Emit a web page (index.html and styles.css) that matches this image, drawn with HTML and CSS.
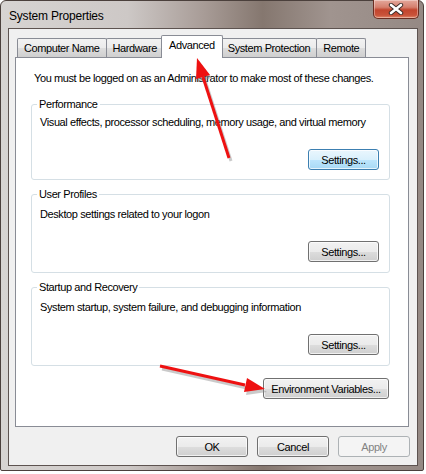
FILE: index.html
```html
<!DOCTYPE html>
<html>
<head>
	<title>System Properties</title>
	<link rel="stylesheet" href="styles.css">
</head>
<body>
	<div class="window">
		<div class="titlebar">
			<span class="title">System Properties</span>
			<div class="close">
				<svg width="16" height="12" viewBox="0 0 16 12">
					<path d="M3 2 L13 10 M13 2 L3 10" stroke="#3a2a26" stroke-width="4.4" stroke-linecap="round"/>
					<path d="M3 2 L13 10 M13 2 L3 10" stroke="#ffffff" stroke-width="2.6" stroke-linecap="round"/>
				</svg>
			</div>
		</div>

		<div class="client">
			<div class="tabs">
				<div class="tab first">Computer Name</div>
				<div class="tab">Hardware</div>
				<div class="tab active">Advanced</div>
				<div class="tab">System Protection</div>
				<div class="tab">Remote</div>
			</div>

			<div class="panel">
				<p class="note">You must be logged on as an Administrator to make most of these changes.</p>

				<fieldset class="group">
					<legend>Performance</legend>
					<p>Visual effects, processor scheduling, memory usage, and virtual memory</p>
					<div class="actions"><button class="btn default">Settings...</button></div>
				</fieldset>

				<fieldset class="group tall">
					<legend>User Profiles</legend>
					<p>Desktop settings related to your logon</p>
					<div class="actions"><button class="btn">Settings...</button></div>
				</fieldset>

				<fieldset class="group tall">
					<legend>Startup and Recovery</legend>
					<p>System startup, system failure, and debugging information</p>
					<div class="actions"><button class="btn">Settings...</button></div>
				</fieldset>

				<div class="env">
					<button class="btn wide">Environment Variables...</button>
				</div>
			</div>

			<div class="dialog-buttons">
				<button class="btn">OK</button>
				<button class="btn">Cancel</button>
				<button class="btn" disabled>Apply</button>
			</div>
		</div>

		<!-- red callout arrows drawn over the dialog -->
		<svg class="arrows" width="426" height="474" viewBox="0 0 426 474">
			<g fill="#8c8c8c" stroke="#8c8c8c" opacity="0.45" transform="translate(2 3)">
				<line x1="229" y1="158" x2="203" y2="77" stroke-width="3"/>
				<polygon points="197,58 210,75 196,79" stroke="none"/>
				<line x1="160" y1="366" x2="245" y2="385" stroke-width="3"/>
				<polygon points="265,389 244,392 247,378" stroke="none"/>
			</g>
			<g fill="#ee1111" stroke="#ee1111">
				<line x1="229" y1="158" x2="203" y2="77" stroke-width="3"/>
				<polygon points="197,58 210,75 196,79" stroke="none"/>
				<line x1="160" y1="366" x2="245" y2="385" stroke-width="3"/>
				<polygon points="265,389 244,392 247,378" stroke="none"/>
			</g>
		</svg>
	</div>
</body>
</html>
```

FILE: styles.css
```css
body {
	margin: 0;
	padding: 0;
	background-color: #ffffff;
	font-family: "Liberation Sans", Arial, sans-serif;
	font-size: 11px;
	letter-spacing: -0.4px;
	color: #000000;
}

.window {
	position: relative;
	width: 424px;
	height: 471px;
	box-sizing: border-box;
	padding: 0 5px 4px 7px;
	display: flex;
	flex-direction: column;
	border-radius: 6px 6px 2px 2px;
	border: 1px solid #4b403c;
	background: linear-gradient(to right, #d7d4d2 0%, #cdc8c6 30%, #a89c97 48%, #85776f 62%, #a0948f 78%, #958984 100%);
}

.titlebar {
	height: 29px;
	display: flex;
	align-items: flex-start;
}

.title {
	padding: 8px 0 0 1px;
	font-size: 12px;
	letter-spacing: -0.2px;
	color: #000000;
}

.close {
	margin-left: auto;
	margin-right: -1px;
	margin-top: -1px;
	width: 46px;
	height: 19px;
	box-sizing: border-box;
	display: flex;
	align-items: center;
	justify-content: center;
	border: 1px solid #6a2d22;
	border-top: none;
	border-radius: 0 0 5px 5px;
	background: linear-gradient(to bottom, #e4a89c 0%, #d5806e 40%, #c2452e 55%, #c9533a 85%, #e08a6c 100%);
	box-shadow: inset 0 0 0 1px rgba(255, 255, 255, 0.35);
}

.client {
	flex: 1;
	display: flex;
	flex-direction: column;
	background-color: #f0f0f0;
	border: 1px solid #5d5350;
	padding: 6px 8px 8px 6px;
}

.tabs {
	display: flex;
	align-items: flex-end;
	height: 22px;
	padding-left: 2px;
	position: relative;
	z-index: 1;
}

.tab {
	height: 18px;
	padding: 0 6px;
	line-height: 18px;
	border: 1px solid #898c95;
	border-bottom: none;
	border-radius: 2px 2px 0 0;
	margin-left: -1px;
	background: linear-gradient(to bottom, #f2f2f2 0%, #ebebeb 50%, #dddddd 51%, #cfcfcf 100%);
	white-space: nowrap;
}

.tab.first {
	margin-left: 0;
}

.tab.active {
	height: 22px;
	line-height: 19px;
	padding: 0 7px;
	margin: 0 -2px -1px -3px;
	background: #ffffff;
	position: relative;
}

.tab.active + .tab {
	margin-left: 0;
}

.panel {
	height: 370px;
	box-sizing: border-box;
	background-color: #ffffff;
	border: 1px solid #898c95;
	padding: 13px 18px 0 15px;
}

.panel p {
	margin: 0;
	line-height: 14px;
	white-space: nowrap;
}

.note {
	padding-left: 3px;
	margin-bottom: 12px !important;
}

.group {
	margin: 0 0 7px 0;
	padding: 4px 10px 9px 8px;
	border: 1px solid #d5dfe5;
	border-radius: 3px;
}

.group.tall {
	padding-top: 6px;
	padding-bottom: 10px;
}

.group legend {
	padding: 0 2px;
	margin-left: -3px;
	line-height: 14px;
}

.actions {
	display: flex;
	justify-content: flex-end;
	margin-top: 20px;
}

.btn {
	height: 21px;
	width: 71px;
	box-sizing: border-box;
	padding: 0 4px;
	font-family: "Liberation Sans", Arial, sans-serif;
	font-size: 11px;
	letter-spacing: -0.4px;
	white-space: nowrap;
	color: #000000;
	border: 1px solid #707070;
	border-radius: 3px;
	background: linear-gradient(to bottom, #f2f2f2 0%, #ebebeb 50%, #dddddd 51%, #cfcfcf 100%);
	box-shadow: inset 0 0 0 1px rgba(255, 255, 255, 0.7);
}

.btn.default {
	border-color: #3c7fb1;
	background: linear-gradient(to bottom, #eaf6fd 0%, #d9f0fc 50%, #bee6fd 51%, #a7d9f5 100%);
}

.btn.wide {
	width: 126px;
}

.btn:disabled {
	color: #838383;
	border-color: #adb2b5;
	background: #f4f4f4;
	box-shadow: none;
}

.env {
	display: flex;
	justify-content: flex-end;
	margin-top: 12px;
	padding-right: 1px;
}

.dialog-buttons {
	display: flex;
	justify-content: flex-end;
	gap: 9px;
	margin-top: 9px;
	margin-right: -1px;
}

.dialog-buttons .btn {
	width: 72px;
}

.arrows {
	position: absolute;
	left: -1px;
	top: -1px;
	pointer-events: none;
}
```
